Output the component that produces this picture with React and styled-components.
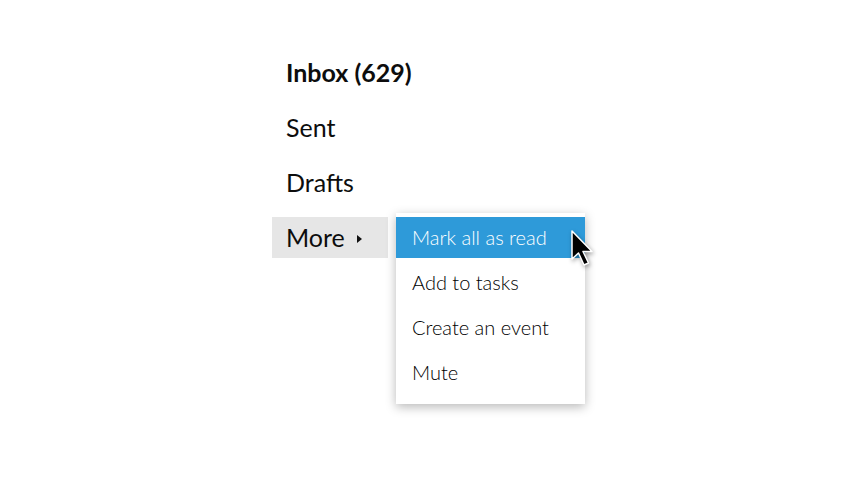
import React from 'react';
import styled, { createGlobalStyle } from 'styled-components';

const GlobalStyle = createGlobalStyle`
    html, body {
        margin: 0;
        padding: 0;
        background: #ffffff;
    }
    body {
        font-family: 'Lato', 'Open Sans', sans-serif;
    }
`;

const menuItems = ['Mark all as read', 'Add to tasks', 'Create an event', 'Mute'];

const MailMenu = () => {
    return (
        <Page>
            <GlobalStyle />
            <Nav>
                <NavItem $bold>Inbox (629)</NavItem>
                <NavItem>Sent</NavItem>
                <NavItem>Drafts</NavItem>
                <MoreRow>
                    <MoreButton>
                        More
                        <Caret />
                    </MoreButton>
                    <Dropdown>
                        {menuItems.map((label, i) => (
                            <DropdownItem key={label} $active={i === 0}>
                                {label}
                                {i === 0 && (
                                    <Cursor viewBox="0 0 24 44" width="24" height="44">
                                        <path
                                            d="M2 2 L2 30 L8.5 24 L14 36 L18.5 34 L13 22.5 L22 22.5 Z"
                                            fill="#000"
                                            stroke="#fff"
                                            strokeWidth="1.5"
                                            strokeLinejoin="round"
                                        />
                                    </Cursor>
                                )}
                            </DropdownItem>
                        ))}
                    </Dropdown>
                </MoreRow>
            </Nav>
        </Page>
    );
};

// Styled Components
const Page = styled.div`
    width: 860px;
    height: 480px;
    position: relative;
    overflow: hidden;
    background: #fff;
`;

const Nav = styled.div`
    display: flex;
    flex-direction: column;
    align-items: flex-start;
    padding: 52px 0 0 272px;
    gap: 14px;
`;

const NavItem = styled.div`
    height: 41px;
    line-height: 41px;
    padding: 0 14px;
    font-size: 25px;
    font-weight: ${p => (p.$bold ? 700 : 400)};
    color: #0d0d0d;
`;

const MoreRow = styled.div`
    display: flex;
    align-items: flex-start;
    gap: 8px;
`;

const MoreButton = styled.div`
    width: 116px;
    box-sizing: border-box;
    height: 41px;
    line-height: 41px;
    padding: 0 14px;
    font-size: 25px;
    color: #0d0d0d;
    background: #e6e6e6;
    display: flex;
    align-items: center;
    gap: 12px;
`;

const Caret = styled.span`
    width: 0;
    height: 0;
    border-top: 4px solid transparent;
    border-bottom: 4px solid transparent;
    border-left: 5px solid #111;
    margin-top: 2px;
`;

const Dropdown = styled.div`
    margin-top: -4px;
    width: 189px;
    padding: 4px 0 11px;
    background: #fff;
    box-shadow: 0 3px 10px rgba(0, 0, 0, 0.28);
    display: flex;
    flex-direction: column;
    gap: 4px;
`;

const DropdownItem = styled.div`
    position: relative;
    height: 41px;
    line-height: 41px;
    padding: 0 16px;
    font-size: 20px;
    font-weight: 300;
    color: ${p => (p.$active ? '#fff' : '#000')};
    background: ${p => (p.$active ? '#2e9ad9' : 'transparent')};
`;

const Cursor = styled.svg`
    position: absolute;
    left: 174px;
    top: 12px;
    filter: drop-shadow(1px 2px 2px rgba(0, 0, 0, 0.35));
`;

export default MailMenu;
